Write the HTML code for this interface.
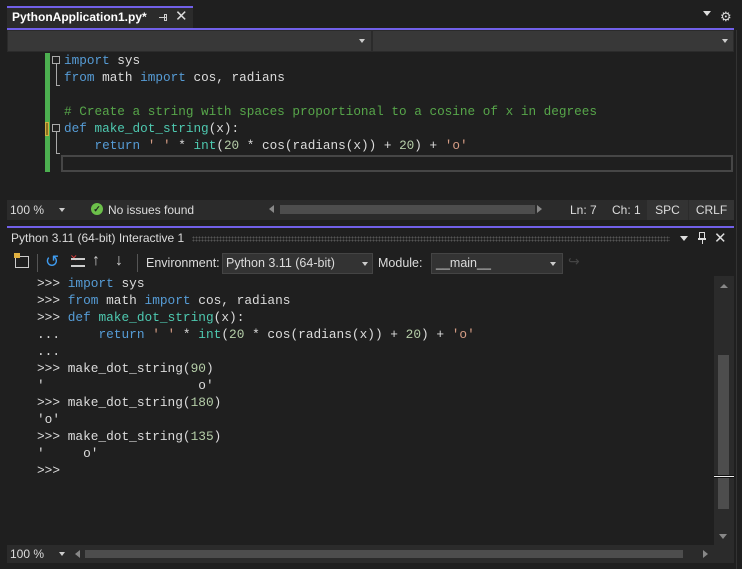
<!DOCTYPE html>
<html><head><meta charset="utf-8"><style>
*{margin:0;padding:0;box-sizing:border-box}
body{width:742px;height:569px;background:#1f1f1f;position:relative;overflow:hidden;font-family:"Liberation Sans",sans-serif;color:#dcdcdc;font-size:12px}
.a{position:absolute}
.mono{font-family:"Liberation Mono",monospace;white-space:pre}
.k{color:#569cd6}.f{color:#4ec9b0}.c{color:#57a64a}.s{color:#d69d85}.n{color:#b5cea8}
.ln{position:absolute;left:64px;font-size:12.7px;line-height:17px}
.il{position:absolute;left:37px;font-size:12.8px;line-height:17px}
</style></head><body>
<!-- tab -->
<div class="a" style="left:7px;top:6px;width:186px;height:22px;background:#2b2b2b;border-top:2px solid #7160e8"></div>
<div class="a" style="left:12px;top:10px;font-weight:bold;font-size:12px;color:#fff">PythonApplication1.py*</div>
<div class="a" style="left:159px;top:17px;width:7px;height:1px;background:#ccc"></div>
<div class="a" style="left:164px;top:14px;width:3px;height:7px;border:1px solid #ccc"></div>
<div class="a" style="left:175px;top:7px;font-size:15px;color:#ddd">✕</div>
<div class="a" style="left:703px;top:11px;width:0;height:0;border-left:4px solid transparent;border-right:4px solid transparent;border-top:5px solid #ddd"></div>
<div class="a" style="left:720px;top:9px;font-size:13px;color:#ddd">⚙</div>
<div class="a" style="left:7px;top:28px;width:727px;height:2px;background:#7160e8"></div>
<!-- nav bar -->
<div class="a" style="left:7px;top:30px;width:727px;height:22px;background:#2b2b2b"></div>
<div class="a" style="left:8px;top:31px;width:363px;height:20px;background:#383838"></div>
<div class="a" style="left:373px;top:31px;width:360px;height:20px;background:#383838"></div>
<div class="a" style="left:359px;top:39px;border-left:3px solid transparent;border-right:3px solid transparent;border-top:4px solid #ccc"></div>
<div class="a" style="left:722px;top:39px;border-left:3px solid transparent;border-right:3px solid transparent;border-top:4px solid #ccc"></div>
<!-- editor -->
<div class="a" style="left:7px;top:52px;width:727px;height:148px;background:#1f1f1f"></div>
<div class="a" style="left:45px;top:53px;width:5px;height:119px;background:#4caf50"></div>
<div class="a" style="left:45px;top:122px;width:4px;height:14px;background:#8a7020;border:1px solid #d0b040"></div>
<div class="a" style="left:61px;top:155px;width:672px;height:17px;border:2px solid #464646"></div>
<div class="a" style="left:52px;top:56px;width:8px;height:8px;border:1px solid #aaa"></div>
<div class="a" style="left:56px;top:64px;width:1px;height:22px;background:#aaa"></div>
<div class="a" style="left:56px;top:85px;width:4px;height:1px;background:#aaa"></div>
<div class="a" style="left:52px;top:124px;width:8px;height:8px;border:1px solid #aaa"></div>
<div class="a" style="left:56px;top:132px;width:1px;height:22px;background:#aaa"></div>
<div class="a" style="left:56px;top:153px;width:4px;height:1px;background:#aaa"></div>
<div class="a mono ln" style="top:52px"><span class="k">import</span> sys</div>
<div class="a mono ln" style="top:69px"><span class="k">from</span> math <span class="k">import</span> cos, radians</div>
<div class="a mono ln" style="top:103px"><span class="c"># Create a string with spaces proportional to a cosine of x in degrees</span></div>
<div class="a mono ln" style="top:120px"><span class="k">def</span> <span class="f">make_dot_string</span>(x):</div>
<div class="a mono ln" style="top:137px">    <span class="k">return</span> <span class="s">' '</span> * <span class="f">int</span>(<span class="n">20</span> * cos(radians(x)) + <span class="n">20</span>) + <span class="s">'o'</span></div>
<!-- status -->
<div class="a" style="left:7px;top:200px;width:727px;height:20px;background:#2b2b2b"></div>
<div class="a" style="left:10px;top:203px">100 %</div>
<div class="a" style="left:59px;top:208px;border-left:3px solid transparent;border-right:3px solid transparent;border-top:4px solid #ccc"></div>
<div class="a" style="left:91px;top:203px;width:12px;height:12px;border-radius:50%;background:#6cc04a;color:#1f1f1f;font-size:9px;text-align:center;line-height:12px;font-weight:bold">✓</div>
<div class="a" style="left:108px;top:203px">No issues found</div>
<div class="a" style="left:269px;top:205px;border-top:4px solid transparent;border-bottom:4px solid transparent;border-right:5px solid #888"></div>
<div class="a" style="left:280px;top:205px;width:255px;height:9px;background:#4d4d4d"></div>
<div class="a" style="left:537px;top:205px;border-top:4px solid transparent;border-bottom:4px solid transparent;border-left:5px solid #888"></div>
<div class="a" style="left:570px;top:203px">Ln: 7</div>
<div class="a" style="left:612px;top:203px">Ch: 1</div>
<div class="a" style="left:647px;top:200px;width:41px;height:20px;background:#333;text-align:center;line-height:20px">SPC</div>
<div class="a" style="left:689px;top:200px;width:45px;height:20px;background:#333;text-align:center;line-height:20px">CRLF</div>
<!-- interactive -->
<div class="a" style="left:7px;top:226px;width:727px;height:2px;background:#7160e8"></div>
<div class="a" style="left:11px;top:231px;font-size:12px">Python 3.11 (64-bit) Interactive 1</div>
<div class="a" style="left:192px;top:236px;width:478px;height:6px;background-image:radial-gradient(#555 40%,transparent 41%);background-size:3px 3px"></div>
<div class="a" style="left:680px;top:236px;border-left:4px solid transparent;border-right:4px solid transparent;border-top:5px solid #ddd"></div>
<div class="a" style="left:699px;top:232px;width:6px;height:7px;border:1.5px solid #ddd"></div>
<div class="a" style="left:698px;top:238px;width:8px;height:1.5px;background:#ddd"></div>
<div class="a" style="left:701.5px;top:239px;width:1.5px;height:5px;background:#ddd"></div>
<div class="a" style="left:714px;top:229px;font-size:15px;color:#ddd">✕</div>
<!-- toolbar -->
<div class="a" style="left:15px;top:256px;width:14px;height:12px;border:1.5px solid #ccc"></div>
<div class="a" style="left:14px;top:253px;width:6px;height:5px;background:#e0b040"></div>
<div class="a" style="left:37px;top:254px;width:1px;height:18px;background:#555"></div>
<div class="a" style="left:45px;top:252px;font-size:17px;color:#3f9cf0">↺</div>
<div class="a" style="left:70px;top:254px;font-size:9px;color:#e04040;line-height:8px">✕</div>
<div class="a" style="left:71px;top:258px;width:14px;height:9px;border-top:2px solid #ccc;border-bottom:2px solid #ccc"></div>
<div class="a" style="left:92px;top:252px;font-size:16px;color:#ccc">↑</div>
<div class="a" style="left:115px;top:252px;font-size:16px;color:#ccc">↓</div>
<div class="a" style="left:137px;top:254px;width:1px;height:18px;background:#555"></div>
<div class="a" style="left:146px;top:256px;font-size:12.5px">Environment:</div>
<div class="a" style="left:222px;top:253px;width:151px;height:21px;background:#333;border:1px solid #444"></div>
<div class="a" style="left:226px;top:256px;font-size:12.5px">Python 3.11 (64-bit)</div>
<div class="a" style="left:362px;top:262px;border-left:3px solid transparent;border-right:3px solid transparent;border-top:4px solid #ccc"></div>
<div class="a" style="left:378px;top:256px;font-size:12.5px">Module:</div>
<div class="a" style="left:431px;top:253px;width:132px;height:21px;background:#333;border:1px solid #444"></div>
<div class="a" style="left:436px;top:256px;font-size:12.5px">__main__</div>
<div class="a" style="left:550px;top:262px;border-left:3px solid transparent;border-right:3px solid transparent;border-top:4px solid #ccc"></div>
<div class="a" style="left:568px;top:253px;font-size:14px;color:#444">↪</div>
<!-- output -->
<div class="a mono il" style="top:275px">&gt;&gt;&gt; <span class="k">import</span> sys</div>
<div class="a mono il" style="top:292px">&gt;&gt;&gt; <span class="k">from</span> math <span class="k">import</span> cos, radians</div>
<div class="a mono il" style="top:309px">&gt;&gt;&gt; <span class="k">def</span> <span class="f">make_dot_string</span>(x):</div>
<div class="a mono il" style="top:326px">...     <span class="k">return</span> <span class="s">' '</span> * <span class="f">int</span>(<span class="n">20</span> * cos(radians(x)) + <span class="n">20</span>) + <span class="s">'o'</span></div>
<div class="a mono il" style="top:343px">...</div>
<div class="a mono il" style="top:360px">&gt;&gt;&gt; make_dot_string(<span class="n">90</span>)</div>
<div class="a mono il" style="top:377px">'                    o'</div>
<div class="a mono il" style="top:394px">&gt;&gt;&gt; make_dot_string(<span class="n">180</span>)</div>
<div class="a mono il" style="top:411px">'o'</div>
<div class="a mono il" style="top:428px">&gt;&gt;&gt; make_dot_string(<span class="n">135</span>)</div>
<div class="a mono il" style="top:445px">'     o'</div>
<div class="a mono il" style="top:462px">&gt;&gt;&gt;</div>
<!-- vscroll -->
<div class="a" style="left:714px;top:276px;width:20px;height:269px;background:#2b2b2b"></div>
<div class="a" style="left:720px;top:284px;border-left:4px solid transparent;border-right:4px solid transparent;border-bottom:4px solid #888"></div>
<div class="a" style="left:718px;top:355px;width:11px;height:154px;background:#4d4d4d"></div>
<div class="a" style="left:714px;top:475px;width:20px;height:3px;background:#eee;border-top:1px solid #111;border-bottom:1px solid #111"></div>
<div class="a" style="left:719px;top:534px;border-left:4px solid transparent;border-right:4px solid transparent;border-top:5px solid #888"></div>
<!-- bottom status -->
<div class="a" style="left:7px;top:545px;width:727px;height:18px;background:#2b2b2b"></div>
<div class="a" style="left:10px;top:547px">100 %</div>
<div class="a" style="left:59px;top:552px;border-left:3px solid transparent;border-right:3px solid transparent;border-top:4px solid #ccc"></div>
<div class="a" style="left:75px;top:550px;border-top:4px solid transparent;border-bottom:4px solid transparent;border-right:5px solid #888"></div>
<div class="a" style="left:85px;top:550px;width:598px;height:8px;background:#4d4d4d"></div>
<div class="a" style="left:703px;top:550px;border-top:4px solid transparent;border-bottom:4px solid transparent;border-left:5px solid #888"></div>
<div class="a" style="left:736px;top:30px;width:1px;height:539px;background:#333"></div>
</body></html>
